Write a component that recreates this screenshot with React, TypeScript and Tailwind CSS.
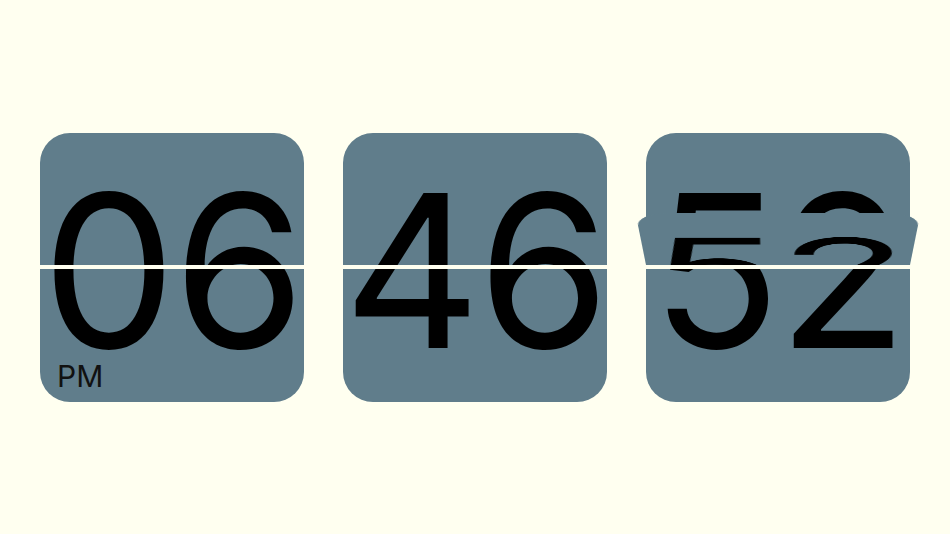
const font = { fontFamily: "Inter, 'Noto Sans', sans-serif" };

const Digits = ({ value, offset }: { value: string; offset: "top" | "bottom" }) => (
  <div
    className={`absolute left-0 w-full h-[269px] flex items-center justify-center pt-[6px] text-[213px] tracking-[-3px] leading-none text-black ${
      offset === "top" ? "top-0" : "top-[-136px]"
    }`}
  >
    {value}
  </div>
);

interface CardProps {
  value: string;
  label?: string;
  flipping?: boolean;
}

const FlipCard = ({ value, label, flipping }: CardProps) => (
  <div className="relative w-[264px] h-[269px] flex flex-col gap-[4px] [perspective:1670px] [perspective-origin:50%_132px]">
    <div className="relative h-[132px] overflow-hidden rounded-t-[30px] bg-[#607d8b]">
      <Digits value={value} offset="top" />
    </div>
    <div className="relative h-[133px] overflow-hidden rounded-b-[30px] bg-[#607d8b]">
      <Digits value={value} offset="bottom" />
      {label && (
        <span className="absolute left-[17px] bottom-[11px] text-[30px] leading-none text-[#111]">{label}</span>
      )}
    </div>
    {flipping && (
      <div className="absolute top-0 left-0 w-full h-[132px] overflow-hidden rounded-t-[30px] bg-[#607d8b] origin-bottom [transform:rotateX(-68.6deg)]">
        <Digits value={value} offset="top" />
      </div>
    )}
  </div>
);

export default function App() {
  return (
    <div className="w-full h-screen bg-[#fffff0] flex items-center justify-center gap-[39px]" style={font}>
      <FlipCard value="06" label="PM" />
      <FlipCard value="46" />
      <FlipCard value="52" flipping />
    </div>
  );
}
